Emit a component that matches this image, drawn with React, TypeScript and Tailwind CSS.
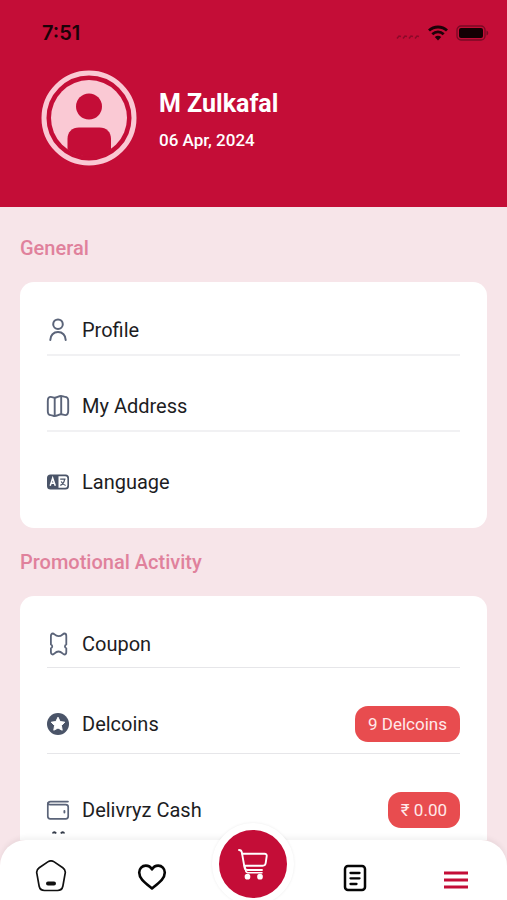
import React from 'react';
import clsx from 'clsx';

interface MenuRow {
  label: string;
  icon: React.ReactNode;
  badge?: string;
}

const ProfileIcon = () => (
  <svg viewBox="0 0 24 24" className="h-6 w-6" fill="none" stroke="#5b6479" strokeWidth="2" strokeLinecap="round">
    <circle cx="12" cy="6.200" r="4.800" />
    <path d="M4.300 22c0-4.800 3.300-8 7.700-8s7.700 3.200 7.700 8" />
  </svg>
);

const MapIcon = () => (
  <svg viewBox="0 0 24 24" className="h-6 w-6" fill="none" stroke="#5b6479" strokeWidth="1.900" strokeLinejoin="round">
    <path d="M1.800 7c0-2.800 1-4.100 3-4.100 1.500 0 2.500.8 3.900.8 2.100 0 3.900-1.700 6.300-1.700 1.500 0 2.500.9 3.900.9 2.300 0 3.300 1.200 3.300 3.900V17c0 2.800-1 4.100-3 4.100-1.600 0-2.600-.8-4.200-.8-2.100 0-3.900 1.700-6.300 1.700-1.500 0-2.400-.9-3.900-.9-2 0-3-1.300-3-3.900z" />
    <path d="M8.700 3.700V22M15.200 2v18.500" />
  </svg>
);

const LanguageIcon = () => (
  <svg viewBox="0 0 24 24" className="h-6 w-6" fill="none">
    <rect x="1" y="4.500" width="22" height="15" rx="3.500" fill="#4a5468" />
    <path d="M12.500 6.300h6.700a2.200 2.200 0 0 1 2.200 2.200v7a2.200 2.200 0 0 1-2.200 2.200h-6.700z" fill="#fff" />
    <path d="M4.200 15.800 6.700 8.200l2.600 7.600M5 13.300h3.500" stroke="#fff" strokeWidth="1.500" />
    <path d="M14.200 9.200h5.300M18.600 9.400c-.5 3-2 5-4.300 6M15.200 11.500c1 2 2.300 3.200 4.400 4" stroke="#4a5468" strokeWidth="1.200" />
  </svg>
);

const CouponIcon = () => (
  <svg viewBox="0 0 24 24" className="h-6 w-6" fill="none" stroke="#5b6479" strokeWidth="1.800" strokeLinecap="round" strokeLinejoin="round">
    <path d="M6.800 1.500c1.700 0 2 2.700 5.700 2.700s4.200-2.700 5.900-2.700c1.300 0 1.900 1 1.900 2.500v8.500c-1.800.8-1.800 3 0 3.800V20c0 1.500-.6 2.500-1.900 2.500-1.700 0-2.400-3-5.900-3s-4 3-5.700 3c-1.300 0-1.900-1-1.900-2.500v-3.700c1.800-.8 1.800-3 0-3.800V4c0-1.500.6-2.500 1.900-2.500z" />
  </svg>
);

const CoinIcon = () => (
  <svg viewBox="0 0 24 24" className="h-6 w-6">
    <circle cx="12" cy="12" r="11" fill="#4a5468" />
    <path
      d="m12 5.200 2.100 4.300 4.700.7-3.400 3.300.8 4.700-4.200-2.200-4.200 2.200.8-4.700-3.400-3.300 4.700-.7z"
      fill="#fff"
      stroke="#fff"
      strokeLinejoin="round"
    />
  </svg>
);

const WalletIcon = () => (
  <svg viewBox="0 0 24 24" className="h-6 w-6" fill="none" stroke="#5b6479" strokeWidth="1.700" strokeLinecap="round">
    <path d="M22 3.600H4.500C2.600 3.600 1.800 4.700 1.800 6.500" />
    <path d="M1.800 6.300v11.900c0 1.800.9 2.600 2.400 2.600h15.600c1.500 0 2.400-.8 2.400-2.600V9.100c0-1.700-.9-2.500-2.400-2.500H4.200c-1.600 0-2.400-.8-2.400-1.600" />
    <path d="M18.400 13v1.500" strokeWidth="1.900" />
  </svg>
);

const generalRows: MenuRow[] = [
  { label: 'Profile', icon: <ProfileIcon /> },
  { label: 'My Address', icon: <MapIcon /> },
  { label: 'Language', icon: <LanguageIcon /> },
];

const promoRows: MenuRow[] = [
  { label: 'Coupon', icon: <CouponIcon /> },
  { label: 'Delcoins', icon: <CoinIcon />, badge: '9 Delcoins' },
  { label: 'Delivryz Cash', icon: <WalletIcon />, badge: '₹ 0.00' },
];

const MenuList = ({ rows, divider }: { rows: MenuRow[]; divider: string }) => (
  <ul className="flex flex-col gap-[38px]">
    {rows.map((row) => (
      <li key={row.label} className={clsx(divider, 'last:border-0 last:pb-0')}>
        <button type="button" className="flex w-full items-center text-left">
          <span className="-ml-px mr-3 shrink-0">{row.icon}</span>
          <span className="text-[20px] leading-6 text-[#1d1d1f]">{row.label}</span>
          {row.badge && (
            <span className="ml-auto rounded-[13px] bg-[#e84c4f] px-[13px] text-[17px] leading-9 text-[#ffe9e9]">
              {row.badge}
            </span>
          )}
        </button>
      </li>
    ))}
  </ul>
);

const StatusBar = () => (
  <div className="flex h-6 items-center justify-between pl-[42px] pr-[18px] text-[#1c0208]">
    <span className="font-['Inter',sans-serif] text-[20px] font-semibold leading-6">7:51</span>
    <div className="flex items-center gap-2">
      <svg viewBox="0 0 24 6" className="mt-2 h-[6px] w-6" fill="none" stroke="#8b0a29" strokeWidth="1.500">
        <path d="M1 4.500 3 2l2 .5M7 4.500 9 2l2 .5M13 4.500 15 2l2 .5M19 4.500 21 2l2 .5" />
      </svg>
      <svg viewBox="0 0 20 16" className="h-4 w-5" fill="none" stroke="currentColor" strokeWidth="2.800">
        <path d="M1 5.600c5-4.800 13-4.800 18 0" />
        <path d="M4.300 9.200c3.300-3 8.100-3 11.400 0" />
        <path d="M6.800 12c1.800-1.700 4.600-1.700 6.400 0L10 15.400z" fill="currentColor" stroke="none" />
      </svg>
      <svg viewBox="0 0 33 16" className="h-4 w-[33px]" fill="none">
        <rect x="1" y="1" width="28" height="14" rx="4" stroke="#780a24" strokeWidth="1.300" />
        <rect x="3" y="3" width="24" height="10" rx="2" fill="#140003" />
        <path d="M30.500 5.500c2.300.8 2.300 4.200 0 5z" fill="#780a24" />
      </svg>
    </div>
  </div>
);

const Avatar = () => (
  <svg viewBox="0 0 96 96" className="h-24 w-24 shrink-0" aria-label="Profile picture">
    <circle cx="48" cy="48" r="45" fill="none" stroke="#fac9d4" strokeWidth="5" />
    <circle cx="48" cy="48" r="38" fill="#fac9d4" />
    <circle cx="48" cy="36.500" r="13" fill="#c40d37" />
    <path d="M26.500 79.300V69c0-7 4.500-11.500 11.500-11.500h20.500c7 0 11.500 4.500 11.500 11.500v10.300C57 89 39.500 89 26.500 79.300z" fill="#c40d37" />
  </svg>
);

const BottomNav = () => (
  <nav className="relative z-10 grid shrink-0 grid-cols-5 grid-rows-[60px] rounded-t-[26px] bg-white shadow-[0_-3px_5px_rgba(0,0,0,0.05)]">
    <button type="button" aria-label="Home" className="flex items-center justify-center pt-3">
      <svg viewBox="0 0 32 32" className="h-8 w-8" fill="none" stroke="#111" strokeWidth="1.700">
        <path d="M12.800 1.900c2-1.300 4.400-1.300 6.400 0l8.600 5.900c2 1.400 2.900 3.500 2.300 5.900l-2.200 12.300c-.6 3-2.400 4.500-5.400 4.500h-13c-3 0-4.800-1.500-5.400-4.500L1.900 13.700c-.6-2.400.3-4.500 2.300-5.900z" />
        <path d="M13 23.500h6" strokeWidth="4" strokeLinecap="round" />
      </svg>
    </button>
    <button type="button" aria-label="Favourites" className="flex items-center justify-center pt-[14px]">
      <svg viewBox="0 0 30 28" className="h-7 w-[30px]" fill="none" stroke="#050505" strokeWidth="2.600" strokeLinejoin="round">
        <path d="M15 25.500C7 19 2.200 15.500 2.200 9.600c0-4 2.900-7 6.600-7 2.600 0 4.800 1.300 6.200 3.800 1.400-2.500 3.600-3.800 6.200-3.800 3.700 0 6.600 3 6.600 7C27.800 15.500 23 19 15 25.500z" />
      </svg>
    </button>
    <div className="-mt-[17px] flex items-start justify-center">
      <button
        type="button"
        aria-label="Cart"
        className="flex h-[82px] w-[82px] shrink-0 items-center justify-center rounded-full border-[7px] border-white bg-[#c40d37] shadow-[0_0_3px_rgba(0,0,0,0.08)]"
      >
        <svg viewBox="0 0 32 32" className="h-8 w-8" fill="none" stroke="#fff" strokeWidth="1.900" strokeLinecap="round" strokeLinejoin="round">
          <path d="M2 2c1.800 0 2.600.8 2.900 2.600l2.600 14.800c.3 1.800 1.300 2.600 3 2.600H25" />
          <path d="M5.200 5.700h22.300c1.600 0 2.400 1 2.200 2.500l-1 6.800c-.2 1.700-1.300 2.700-3 2.700H7.400" />
          <path d="M8 17.700c0 5 .8 7 3 7h14" strokeWidth="1.500" />
          <circle cx="10.500" cy="28.700" r="1.900" fill="#fff" />
          <circle cx="23" cy="28.700" r="1.900" fill="#fff" />
        </svg>
      </button>
    </div>
    <button type="button" aria-label="Orders" className="flex items-center justify-center pt-4">
      <svg viewBox="0 0 24 28" className="h-7 w-6" fill="none" stroke="#050505" strokeWidth="2.500" strokeLinecap="round">
        <rect x="2" y="2" width="20" height="24" rx="3" />
        <path d="M7.500 9h9M7.500 14.300h9M7.500 20h6" strokeWidth="2.300" />
      </svg>
    </button>
    <button type="button" aria-label="Menu" className="flex items-center justify-center pt-5">
      <svg viewBox="0 0 24 18" className="h-[18px] w-6" fill="none" stroke="#c40d37" strokeWidth="3">
        <path d="M0 2h24M0 9h24M0 16h24" />
      </svg>
    </button>
  </nav>
);

const App = () => {
  return (
    <div className="flex h-screen flex-col overflow-hidden bg-[#f7e5e9] font-['Roboto',sans-serif]">
      <header className="shrink-0 bg-[#c40d37] pb-[41px] pt-[21px] text-white">
        <StatusBar />
        <div className="mt-[25px] flex items-center gap-[22px] px-[41px]">
          <Avatar />
          <div className="pt-1">
            <h1 className="text-[25px] font-bold leading-8">M Zulkafal</h1>
            <p className="mt-2 text-[17px] font-medium leading-6">06 Apr, 2024</p>
          </div>
        </div>
      </header>

      <main className="min-h-0 flex-1 overflow-y-auto px-5 pt-[29px] [scrollbar-width:none]">
        <h2 className="text-[20px] font-medium leading-6 text-[#e0819c]">General</h2>
        <section className="mt-[22px] rounded-[14px] bg-white px-[27px] pb-[34px] pt-9">
          <MenuList rows={generalRows} divider="border-b-2 border-[#f1f1f3] pb-3" />
        </section>

        <h2 className="mt-[22px] text-[20px] font-medium leading-6 text-[#e0819c]">Promotional Activity</h2>
        <section className="mt-[22px] rounded-[14px] bg-white px-[27px] pb-6 pt-9">
          <MenuList rows={promoRows} divider="border-b border-[#e6e6e9] pb-[11px]" />
          <svg viewBox="0 0 24 24" className="mt-[2px] h-6 w-6" fill="none" stroke="#333a48" strokeWidth="2">
            <path d="M6 3.500c0-1.500 2-2 3 0M14 3.500c1-2 3-1.500 3 0" />
          </svg>
        </section>
      </main>

      <BottomNav />
    </div>
  );
};

export default App;
